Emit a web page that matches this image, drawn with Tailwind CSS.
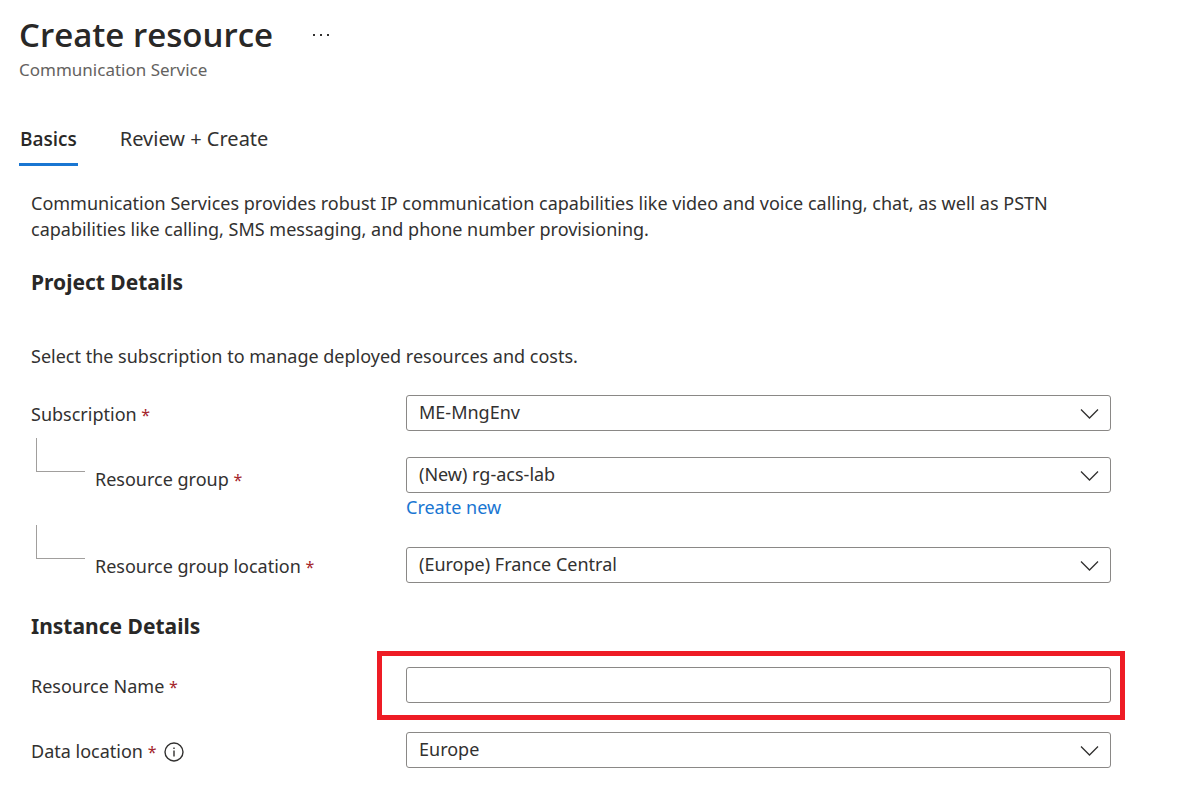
<!DOCTYPE html>
<html lang="en">
<head>
<meta charset="utf-8">
<meta name="viewport" content="width=device-width, initial-scale=1">
<title>Create resource</title>
<script src="https://cdn.jsdelivr.net/npm/@tailwindcss/browser@4"></script>
</head>
<body class="bg-white font-['Noto_Sans','Open_Sans',sans-serif] text-[18px] leading-[26px] text-[#323130]">
<header class="px-[19px] pt-[14px]">
  <div class="flex items-center gap-9">
    <h1 class="font-['Open_Sans','Noto_Sans',sans-serif] text-[33px] leading-[42px] font-semibold text-[#292827]">Create resource</h1>
    <button type="button" aria-label="More actions" class="flex h-6 w-6 items-center justify-center">
      <svg class="h-1 w-[18px]" viewBox="0 0 18 4" fill="#323130" aria-hidden="true"><rect x="1" y="1" width="2" height="2"/><rect x="8" y="1" width="2" height="2"/><rect x="15" y="1" width="2" height="2"/></svg>
    </button>
  </div>
  <p class="pt-px text-[17px] leading-[26px] text-[#646260]">Communication Service</p>
</header>
<nav aria-label="Steps" class="mt-[43px] flex gap-[42px] px-[19px]">
  <a href="#basics" aria-current="page" class="border-b-3 border-[#1976d2] px-px pb-[11px] font-['Open_Sans','Noto_Sans',sans-serif] text-[19px] font-semibold text-[#292827]">Basics</a>
  <a href="#review" class="text-[20px]">Review + Create</a>
</nav>
<main class="pt-6 pr-[88px] pl-[31px]">
  <p>Communication Services provides robust IP communication capabilities like video and voice calling, chat, as well as PSTN capabilities like calling, SMS messaging, and phone number provisioning.</p>
  <form>
    <h2 class="mt-[26px] text-[21px] leading-7 font-bold text-[#292827]">Project Details</h2>
    <p class="mt-[47px]">Select the subscription to manage deployed resources and costs.</p>

    <div class="mt-[26px] flex items-center">
      <label for="subscription" class="w-[375px] shrink-0 pt-[2px]">Subscription <span class="text-[16px] text-[#a4262c]">*</span></label>
      <div class="relative min-w-0 flex-1">
        <select id="subscription" class="h-9 w-full appearance-none rounded-[3px] border border-[#8a8886] bg-white pr-12 pb-[2px] pl-3 leading-[26px]"><option>ME-MngEnv</option></select>
        <svg class="pointer-events-none absolute top-[13px] right-3 h-3 w-[19px]" viewBox="0 0 19 12" fill="none" stroke="#323130" stroke-width="1.3" aria-hidden="true"><path d="M1 1.5 9.500 10 18 1.500"/></svg>
      </div>
    </div>

    <div class="mt-[7px] flex items-start">
      <div class="flex w-[375px] shrink-0 pl-[5px]">
        <span class="h-[34px] w-[49px] border-b border-l border-[#a19f9d]" aria-hidden="true"></span>
        <label for="group" class="mt-[28px] ml-[10px]">Resource group <span class="text-[16px] text-[#a4262c]">*</span></label>
      </div>
      <div class="min-w-0 flex-1 pt-[19px]">
        <div class="relative">
          <select id="group" class="h-9 w-full appearance-none rounded-[3px] border border-[#8a8886] bg-white pr-12 pb-[2px] pl-3 leading-[26px]"><option>(New) rg-acs-lab</option></select>
          <svg class="pointer-events-none absolute top-[13px] right-3 h-3 w-[19px]" viewBox="0 0 19 12" fill="none" stroke="#323130" stroke-width="1.3" aria-hidden="true"><path d="M1 1.5 9.500 10 18 1.500"/></svg>
        </div>
        <a href="#new-group" class="mt-[1px] block w-fit text-[#1976d2]">Create new</a>
      </div>
    </div>

    <div class="mt-[5px] flex items-start">
      <div class="flex w-[375px] shrink-0 pl-[5px]">
        <span class="h-[34px] w-[49px] border-b border-l border-[#a19f9d]" aria-hidden="true"></span>
        <label for="group-location" class="mt-[28px] ml-[10px]">Resource group location <span class="text-[16px] text-[#a4262c]">*</span></label>
      </div>
      <div class="min-w-0 flex-1 pt-[22px]">
        <div class="relative">
          <select id="group-location" class="h-9 w-full appearance-none rounded-[3px] border border-[#8a8886] bg-white pr-12 pb-[2px] pl-3 leading-[26px]"><option>(Europe) France Central</option></select>
          <svg class="pointer-events-none absolute top-[13px] right-3 h-3 w-[19px]" viewBox="0 0 19 12" fill="none" stroke="#323130" stroke-width="1.3" aria-hidden="true"><path d="M1 1.5 9.500 10 18 1.500"/></svg>
        </div>
      </div>
    </div>

    <h2 class="mt-[29px] text-[21px] leading-7 font-bold text-[#292827]">Instance Details</h2>

    <div class="mt-[27px] flex items-center">
      <label for="resource-name" class="w-[375px] shrink-0 pt-[2px]">Resource Name <span class="text-[16px] text-[#a4262c]">*</span></label>
      <div class="relative min-w-0 flex-1">
        <input id="resource-name" type="text" class="block h-9 w-full rounded-[3px] border border-[#8a8886] bg-white px-3">
        <div class="pointer-events-none absolute -top-4 -right-[14px] -bottom-[17px] -left-[29px] border-5 border-[#ee1c25]" aria-hidden="true"></div>
      </div>
    </div>

    <div class="mt-[29px] flex items-center">
      <div class="flex w-[375px] shrink-0 items-center gap-2 pt-[2px]">
        <label for="data-location">Data location <span class="text-[16px] text-[#a4262c]">*</span></label>
        <button type="button" aria-label="About data location" class="pt-[2px]">
          <svg class="h-5 w-5" viewBox="0 0 20 20" fill="none" stroke="#323130" stroke-width="1.4" aria-hidden="true"><circle cx="10" cy="10" r="9"/><path d="M10 8.500v6M10 5.500v1.500"/></svg>
        </button>
      </div>
      <div class="relative min-w-0 flex-1">
        <select id="data-location" class="h-9 w-full appearance-none rounded-[3px] border border-[#8a8886] bg-white pr-12 pb-[2px] pl-3 leading-[26px]"><option>Europe</option></select>
        <svg class="pointer-events-none absolute top-[13px] right-3 h-3 w-[19px]" viewBox="0 0 19 12" fill="none" stroke="#323130" stroke-width="1.3" aria-hidden="true"><path d="M1 1.5 9.500 10 18 1.500"/></svg>
      </div>
    </div>
  </form>
</main>
</body>
</html>
